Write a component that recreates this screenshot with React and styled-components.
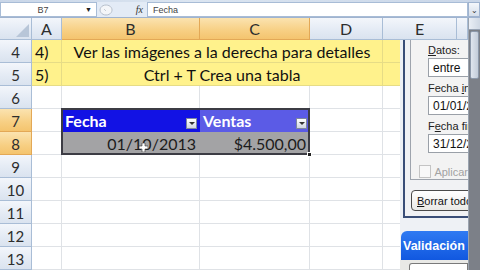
import React from 'react';
import styled, { createGlobalStyle, css } from 'styled-components';

const GlobalStyle = createGlobalStyle`
  *, *::before, *::after { box-sizing: border-box; }
  html, body { margin: 0; padding: 0; overflow: hidden; background: #fff; }
  body { font-family: "Lato", "Liberation Sans", sans-serif; }
`;

const Window = styled.div`
  width: 480px;
  height: 270px;
  display: flex;
  flex-direction: column;
  overflow: hidden;
  background: #fff;
`;

const RibbonEdge = styled.div`
  height: 2px;
  background: linear-gradient(90deg, #c9d6e8, #dbe5f1 40%, #c9d6e8);
`;

// formula bar
const FormulaBar = styled.div`
  height: 16px;
  display: flex;
  align-items: stretch;
  background: #e3ebf6;
  border-bottom: 1px solid #9fb3cf;
`;

const NameBox = styled.div`
  width: 97px;
  display: flex;
  align-items: center;
  justify-content: space-between;
  padding: 0 4px 0 0;
  background: #fff;
  border: 1px solid #a8bcd6;
  font-family: "Liberation Sans", sans-serif;
  font-size: 9px;
  color: #444;
  span:first-child { flex: 1; text-align: center; }
`;

const Caret = styled.span`
  font-size: 7px;
  color: #222;
`;

const FxArea = styled.div`
  width: 50px;
  display: flex;
  align-items: center;
  justify-content: space-between;
  padding: 0 4px 0 2px;
`;

const FxLabel = styled.span`
  font-family: "Liberation Serif", serif;
  font-style: italic;
  font-size: 10px;
  color: #333;
`;

const FormulaInput = styled.div`
  flex: 1;
  display: flex;
  align-items: center;
  padding-left: 5px;
  background: #fff;
  border: 1px solid #a8bcd6;
  font-family: "Liberation Sans", sans-serif;
  font-size: 9px;
  color: #444;
`;

const ExpandButton = styled.div`
  width: 12px;
  display: flex;
  align-items: center;
  justify-content: center;
  background: linear-gradient(#f4f7fb, #d5deea);
  border: 1px solid #9fb3cf;
  font-size: 8px;
  line-height: 1;
  color: #333;
`;

// sheet
const Body = styled.div`
  flex: 1;
  display: flex;
  min-height: 0;
`;

const Sheet = styled.div`
  position: relative;
  width: 468px;
  display: grid;
  grid-template-columns: 32px 30px 138px 110px 73px 74px 11px;
  grid-template-rows: 22px repeat(10, 23px);
  overflow: hidden;
`;

const headerSkin = css`
  background: ${p => (p.$active
    ? 'linear-gradient(#fbe3b0, #f7cf83 60%, #f4c46e)'
    : 'linear-gradient(#f3f6fb, #e3eaf4 60%, #dae3ef)')};
  border-right: 1px solid ${p => (p.$active ? '#e3a856' : '#a9bdd6')};
  border-bottom: 1px solid ${p => (p.$active ? '#e3a856' : '#a9bdd6')};
  color: #2d2d2d;
  font-size: 16px;
  display: flex;
  align-items: center;
  justify-content: center;
`;

const Corner = styled.div`
  ${headerSkin};
  position: relative;
  &::after {
    content: '';
    position: absolute;
    right: 2px;
    bottom: 2px;
    width: 13px;
    height: 13px;
    background: #b8c6d8;
    clip-path: polygon(100% 0, 100% 100%, 0 100%);
  }
`;

const ColHead = styled.div`
  ${headerSkin};
  grid-row: 1;
  grid-column: ${p => p.$col};
`;

const RowHead = styled.div`
  ${headerSkin};
  grid-row: ${p => p.$row};
  grid-column: 1;
  font-size: 15px;
  padding-top: 1px;
`;

const Cell = styled.div`
  position: relative;
  grid-row: ${p => p.$row};
  grid-column: ${p => p.$col} / span ${p => p.$span || 1};
  display: flex;
  align-items: center;
  justify-content: ${p => p.$align || 'flex-start'};
  padding: 1px 3px 0;
  background: ${p => p.$fill || '#fff'};
  border-right: 1px solid ${p => p.$line || '#dfe2e6'};
  border-bottom: 1px solid ${p => p.$line || '#dfe2e6'};
  color: ${p => p.$color || '#111'};
  font-size: 16px;
  font-weight: ${p => (p.$bold ? 700 : 400)};
  white-space: nowrap;
  overflow: hidden;
`;

const FilterButton = styled.span`
  position: absolute;
  right: 2px;
  bottom: 2px;
  width: 11px;
  height: 11px;
  border: 1px solid #7d86a0;
  background: linear-gradient(#ffffff, #cfd5e2);
  display: flex;
  align-items: center;
  justify-content: center;
  &::after {
    content: '';
    border-left: 3px solid transparent;
    border-right: 3px solid transparent;
    border-top: 3px solid #333;
  }
`;

const SelectionFrame = styled.div`
  grid-row: 5 / 7;
  grid-column: 3 / 5;
  position: relative;
  border: 2px solid #3c3c44;
  margin: -1px 0 0 -1px;
  pointer-events: none;
  z-index: 2;
`;

const FillHandle = styled.span`
  position: absolute;
  right: -4px;
  bottom: -4px;
  width: 5px;
  height: 5px;
  background: #222;
  border: 1px solid #fff;
`;

const Pointer = styled.svg`
  position: absolute;
  left: 77px;
  top: 11px;
`;

// task pane
const TaskPane = styled.div`
  position: absolute;
  top: 22px;
  left: 400px;
  width: 68px;
  bottom: 0;
  display: flex;
  flex-direction: column;
  background: #eef1f5;
  overflow: hidden;
  z-index: 3;
  font-family: "Liberation Sans", sans-serif;
`;

const CriteriaFrame = styled.div`
  height: 178px;
  flex-shrink: 0;
  margin-left: 3px;
  padding: 0 0 8px 5px;
  border-left: 2px solid #3a4e77;
  border-bottom: 2px solid #3a4e77;
  display: flex;
  flex-direction: column;
  background: #f1f2f4;
`;

const CriteriaGroup = styled.div`
  height: 140px;
  flex-shrink: 0;
  display: flex;
  flex-direction: column;
  padding: 3px 0 0 17px;
  border-left: 1px solid #9ea4ad;
  border-bottom: 1px solid #9ea4ad;
  background: #f3f3f3;
  overflow: hidden;
`;

const FieldLabel = styled.div`
  height: 14px;
  font-size: 11px;
  line-height: 14px;
  color: #222;
  white-space: nowrap;
  u { text-decoration: underline; }
`;

const FieldInput = styled.div`
  height: 19px;
  margin: 1px 0 4px;
  width: 60px;
  flex-shrink: 0;
  padding: 0 4px;
  display: flex;
  align-items: center;
  background: #fff;
  border: 1px solid #9aa0a8;
  font-size: 12px;
  color: #111;
  white-space: nowrap;
  overflow: hidden;
`;

const CheckRow = styled.div`
  display: flex;
  align-items: center;
  gap: 3px;
  margin: 8px 0 0 -9px;
  font-size: 11px;
  color: #a2a2a2;
`;

const CheckBox = styled.span`
  width: 13px;
  height: 13px;
  border: 1px solid #c4c4c4;
  background: #f8f8f8;
`;

const ClearButton = styled.div`
  margin: 10px 0 0 1px;
  height: 21px;
  width: 70px;
  flex-shrink: 0;
  display: flex;
  align-items: center;
  padding-left: 5px;
  border: 1px solid #4a4a4a;
  border-radius: 4px;
  background: linear-gradient(#ffffff, #e9e9e6);
  font-size: 11px;
  color: #111;
  white-space: nowrap;
`;

const SectionTab = styled.div`
  margin-top: 13px;
  margin-left: 1px;
  height: 29px;
  flex-shrink: 0;
  display: flex;
  align-items: center;
  padding-left: 2px;
  background: linear-gradient(#2f7af2, #1158e0);
  border-top-left-radius: 6px;
  color: #fff;
  font-weight: 700;
  font-size: 12.5px;
  white-space: nowrap;
`;

const SectionBody = styled.div`
  flex: 1;
  padding: 3px 0 0 9px;
  background: #e9e9e6;
  div {
    height: 100%;
    border: 1px solid #7a7a7a;
    border-bottom: none;
    border-radius: 3px 0 0 0;
    background: #fff;
  }
`;

const VScroll = styled.div`
  flex: 1;
  display: flex;
  flex-direction: column;
  background: #7c8088;
  border-left: 1px solid #9aa3af;
`;

const ScrollArrow = styled.div`
  height: 12px;
  background: linear-gradient(90deg, #e9eef5, #cfd8e4);
  border-bottom: 1px solid #97a3b4;
`;

const ScrollThumb = styled.div`
  height: 48px;
  margin: 1px;
  background: linear-gradient(90deg, #dfe5ee, #c3ccd9);
  border: 1px solid #8c98aa;
  border-radius: 2px;
`;

const YELLOW = '#fff28c';
const YELLOW_LINE = '#e6dc86';

const columns = [
  { key: 'A' },
  { key: 'B', active: true },
  { key: 'C', active: true },
  { key: 'D' },
  { key: 'E' },
  { key: '' },
];

const rows = [4, 5, 6, 7, 8, 9, 10, 11, 12, 13];

const notes = {
  4: { tag: '4)', text: 'Ver las imágenes a la derecha para detalles' },
  5: { tag: '5)', text: 'Ctrl + T Crea una tabla' },
};

// grid row of a sheet row, grid column 2 is A
function renderRow(r, gr) {
  const note = notes[r];
  if (note) {
    const y = { $row: gr, $fill: YELLOW, $line: YELLOW_LINE };
    return [
      <Cell key="a" {...y} $col={2}>{note.tag}</Cell>,
      <Cell key="b" {...y} $col={3} $span={3} $align="center">{note.text}</Cell>,
      <Cell key="e" {...y} $col={6} />,
      <Cell key="f" {...y} $col={7} />,
    ];
  }
  if (r === 7) {
    return [
      <Cell key="a" $row={gr} $col={2} />,
      <Cell key="b" $row={gr} $col={3} $fill="#1212e4" $line="#1212e4" $color="#fff" $bold>
        Fecha<FilterButton />
      </Cell>,
      <Cell key="c" $row={gr} $col={4} $fill="#5b5be6" $line="#5b5be6" $color="#fff" $bold>
        Ventas<FilterButton />
      </Cell>,
      <Cell key="d" $row={gr} $col={5} />,
      <Cell key="e" $row={gr} $col={6} />,
      <Cell key="f" $row={gr} $col={7} />,
    ];
  }
  if (r === 8) {
    return [
      <Cell key="a" $row={gr} $col={2} />,
      <Cell key="b" $row={gr} $col={3} $fill="#a3a3a5" $line="#a3a3a5" $color="#1c1c1c" $align="flex-end">
        01/10/2013
        <Pointer width="9" height="9" viewBox="0 0 9 9">
          <path d="M3 0h3v3h3v3H6v3H3V6H0V3h3z" fill="#fff" stroke="#333" strokeWidth="0.6" />
        </Pointer>
      </Cell>,
      <Cell key="c" $row={gr} $col={4} $fill="#a3a3a5" $line="#a3a3a5" $color="#1c1c1c" $align="flex-end">
        $4.500,00
      </Cell>,
      <Cell key="d" $row={gr} $col={5} />,
      <Cell key="e" $row={gr} $col={6} />,
      <Cell key="f" $row={gr} $col={7} />,
    ];
  }
  return columns.map((c, i) => <Cell key={i} $row={gr} $col={i + 2} />);
}

export default function App() {
  return (
    <Window>
      <GlobalStyle />
      <RibbonEdge />
      <FormulaBar>
        <NameBox><span>B7</span><Caret>▼</Caret></NameBox>
        <FxArea>
          <svg width="14" height="12" viewBox="0 0 14 12">
            <path d="M7 1a6 5 0 1 0 0.1 0" fill="#f4f6f9" stroke="#b7c0cc" strokeWidth="1" />
            <path d="M5 5l2 2" stroke="#c6ccd4" strokeWidth="1" />
          </svg>
          <FxLabel>fx</FxLabel>
        </FxArea>
        <FormulaInput>Fecha</FormulaInput>
        <ExpandButton>⌄</ExpandButton>
      </FormulaBar>
      <Body>
        <Sheet>
          <Corner />
          {columns.map((c, i) => (
            <ColHead key={i} $col={i + 2} $active={c.active}>{c.key}</ColHead>
          ))}
          {rows.map((r, i) => (
            <React.Fragment key={r}>
              <RowHead $row={i + 2} $active={r === 7 || r === 8}>{r}</RowHead>
              {renderRow(r, i + 2)}
            </React.Fragment>
          ))}
          <SelectionFrame><FillHandle /></SelectionFrame>
          <TaskPane>
            <CriteriaFrame>
              <CriteriaGroup>
                <FieldLabel><u>D</u>atos:</FieldLabel>
                <FieldInput>entre</FieldInput>
                <FieldLabel>Fecha <u>i</u>nicial:</FieldLabel>
                <FieldInput>01/01/2013</FieldInput>
                <FieldLabel>F<u>e</u>cha final:</FieldLabel>
                <FieldInput>31/12/2013</FieldInput>
                <CheckRow><CheckBox />Aplicar</CheckRow>
              </CriteriaGroup>
              <ClearButton><u>B</u>orrar todo</ClearButton>
            </CriteriaFrame>
            <SectionTab>Validación</SectionTab>
            <SectionBody><div /></SectionBody>
          </TaskPane>
        </Sheet>
        <VScroll>
          <ScrollArrow />
          <ScrollThumb />
        </VScroll>
      </Body>
    </Window>
  );
}
